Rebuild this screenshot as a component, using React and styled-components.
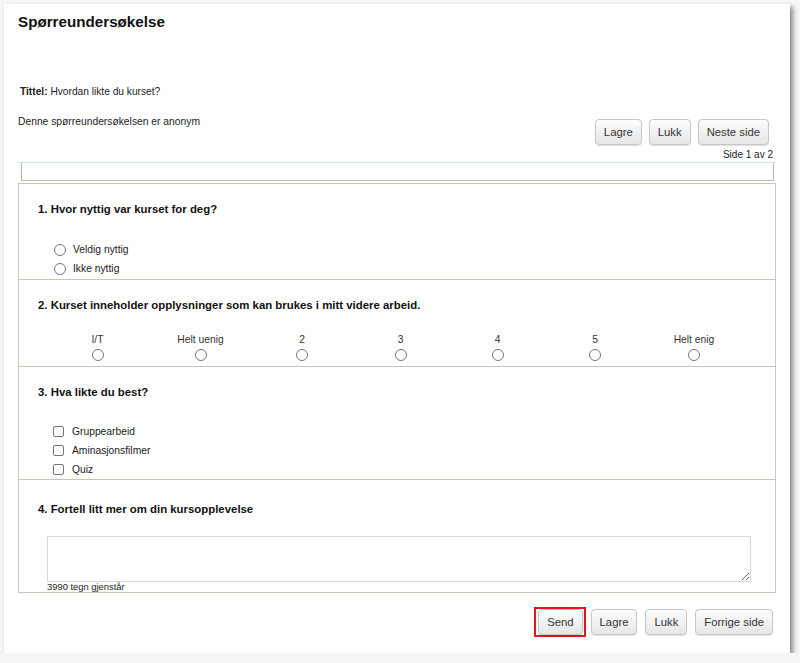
import React from "react";
import styled, { createGlobalStyle } from "styled-components";

const GlobalStyle = createGlobalStyle`
  html, body {
    margin: 0;
    padding: 0;
    background: #f6f6f6;
  }
  body {
    font-family: "Liberation Sans", Arial, sans-serif;
    color: #222;
  }
`;

const Window = styled.div`
  margin: 4px 0 0 4px;
  width: 786px;
  height: 649px;
  box-sizing: border-box;
  background: #fff;
  box-shadow: 3px 3px 5px rgba(0, 0, 0, 0.45);
  padding: 8px 14px 0 14px;
  display: flex;
  flex-direction: column;
`;

const Title = styled.h1`
  margin: 0;
  font-size: 15.2px;
  line-height: 20px;
  font-weight: bold;
  color: #111;
`;

const TitleLine = styled.div`
  margin-top: 53px;
  padding-left: 2px;
  font-size: 10.2px;
  line-height: 14px;
  b {
    font-weight: bold;
  }
`;

const IntroRow = styled.div`
  margin-top: 16px;
  display: flex;
  justify-content: space-between;
  align-items: flex-start;
`;

const Intro = styled.div`
  font-size: 10.3px;
  line-height: 14px;
`;

const ButtonRow = styled.div`
  display: flex;
  align-items: center;
  gap: ${p => p.gap || 7}px;
  margin-top: ${p => p.top || 0}px;
  padding-right: ${p => p.right || 0}px;
  justify-content: flex-end;
`;

const Button = styled.button`
  height: 26px;
  padding: 0 8px;
  font-family: "Liberation Sans", Arial, sans-serif;
  font-size: 11.3px;
  color: #333;
  background: linear-gradient(#fdfdfd, #e6e6e6);
  border: 1px solid #c6c6c6;
  border-radius: 4px;
  box-shadow: 0 1px 1px rgba(0, 0, 0, 0.12);
`;

const Highlight = styled.span`
  display: flex;
  padding: 0 1px 0 2px;
  border: 2px solid #e8141c;
  margin-right: -3px;
`;

const PageInfo = styled.div`
  margin-top: 3px;
  text-align: right;
  padding-right: 3px;
  font-size: 10px;
  line-height: 14px;
`;

const BlueRule = styled.div`
  height: 1px;
  background: #d3e1f1;
`;

const EmptyBox = styled.div`
  height: 17px;
  margin: 0 2px 0 3px;
  border: 1px solid #bcbcae;
  border-top: none;
`;

const SurveyBox = styled.div`
  margin-top: 2px;
  border: 1px solid #c9c7b9;
`;

const Section = styled.div`
  padding: ${p => p.pad};
  border-bottom: ${p => (p.last ? "none" : "1px solid #c9c7b9")};
`;

const Question = styled.div`
  padding-left: 19px;
  font-size: 11.4px;
  line-height: 16px;
  font-weight: bold;
  color: #111;
`;

const OptionList = styled.div`
  margin-top: ${p => p.top}px;
  padding-left: ${p => p.left}px;
  display: flex;
  flex-direction: column;
`;

const Option = styled.label`
  display: flex;
  align-items: center;
  height: 19px;
  font-size: 10.3px;
  color: #222;
`;

const Radio = styled.span`
  display: inline-block;
  width: 10px;
  height: 10px;
  border: 1px solid #767676;
  border-radius: 50%;
  background: #fff;
  margin-right: ${p => p.gap || 0}px;
`;

const Check = styled.span`
  display: inline-block;
  width: 9px;
  height: 9px;
  border: 1px solid #767676;
  border-radius: 2px;
  background: #fff;
  margin-right: 8px;
`;

const Scale = styled.div`
  margin: 20px 0 0 27px;
  display: grid;
  grid-template-columns: 103px 103px 100px 97px 97px 98px 100px;
`;

const ScaleCell = styled.div`
  display: flex;
  flex-direction: column;
  align-items: center;
  font-size: 10.3px;
  line-height: 14px;
  color: #333;
  gap: 2px;
`;

const TextArea = styled.textarea`
  display: block;
  margin: 19px 0 0 28px;
  width: 704px;
  height: 46px;
  box-sizing: border-box;
  border: 1px solid #d8d8e2;
  resize: both;
  font-family: "Liberation Sans", Arial, sans-serif;
`;

const Counter = styled.div`
  margin-left: 28px;
  font-size: 9.4px;
  line-height: 10px;
  color: #222;
`;

const scale = ["I/T", "Helt uenig", "2", "3", "4", "5", "Helt enig"];

export default function App() {
  return (
    <>
      <GlobalStyle />
      <Window>
        <Title>Spørreundersøkelse</Title>
        <TitleLine>
          <b>Tittel:</b> Hvordan likte du kurset?
        </TitleLine>
        <IntroRow>
          <Intro>Denne spørreundersøkelsen er anonym</Intro>
          <ButtonRow top={4} right={7}>
            <Button>Lagre</Button>
            <Button>Lukk</Button>
            <Button>Neste side</Button>
          </ButtonRow>
        </IntroRow>
        <PageInfo>Side 1 av 2</PageInfo>
        <BlueRule />
        <EmptyBox />
        <SurveyBox>
          <Section pad="17px 0 1px 0">
            <Question>1. Hvor nyttig var kurset for deg?</Question>
            <OptionList top={23} left={35}>
              <Option>
                <Radio gap={7} />
                Veldig nyttig
              </Option>
              <Option>
                <Radio gap={7} />
                Ikke nyttig
              </Option>
            </OptionList>
          </Section>
          <Section pad="17px 0 5px 0">
            <Question>
              2. Kurset inneholder opplysninger som kan brukes i mitt videre arbeid.
            </Question>
            <Scale>
              {scale.map(s => (
                <ScaleCell key={s}>
                  {s}
                  <Radio />
                </ScaleCell>
              ))}
            </Scale>
          </Section>
          <Section pad="17px 0 0 0">
            <Question>3. Hva likte du best?</Question>
            <OptionList top={22} left={34}>
              <Option>
                <Check />
                Gruppearbeid
              </Option>
              <Option>
                <Check />
                Aminasjonsfilmer
              </Option>
              <Option>
                <Check />
                Quiz
              </Option>
            </OptionList>
          </Section>
          <Section pad="21px 0 0 0" last>
            <Question>4. Fortell litt mer om din kursopplevelse</Question>
            <TextArea />
            <Counter>3990 tegn gjenstår</Counter>
          </Section>
        </SurveyBox>
        <ButtonRow top={14} right={3} gap={8}>
          <Highlight>
            <Button>Send</Button>
          </Highlight>
          <Button>Lagre</Button>
          <Button>Lukk</Button>
          <Button>Forrige side</Button>
        </ButtonRow>
      </Window>
    </>
  );
}
